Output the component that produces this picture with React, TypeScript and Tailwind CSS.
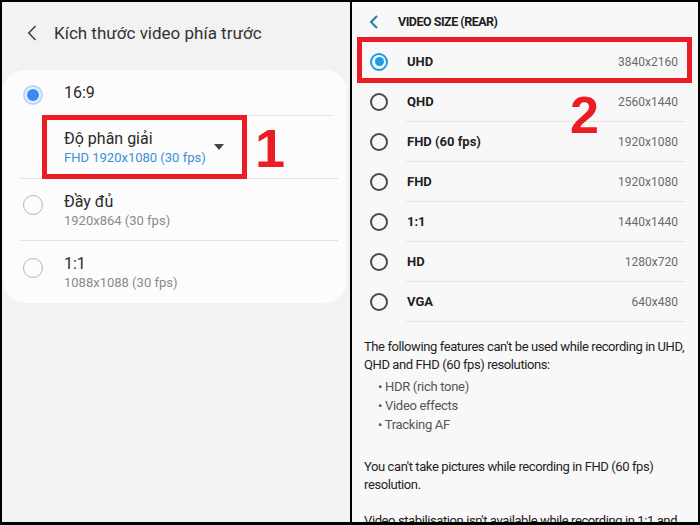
import React from "react";

const Radio = ({ on }: { on?: boolean }) =>
  on ? (
    <div className="w-[20px] h-[20px] rounded-full border-[2px] border-[#bcd6f7] bg-[#eaf2fd] flex items-center justify-center shrink-0">
      <div className="w-[12px] h-[12px] rounded-full bg-[#3d8bf0]" />
    </div>
  ) : (
    <div className="w-[20px] h-[20px] rounded-full border-[1.5px] border-[#b5b5b5] shrink-0" />
  );

const RRadio = ({ on }: { on?: boolean }) =>
  on ? (
    <div className="w-[18px] h-[18px] rounded-full border-[2px] border-[#1b9be0] flex items-center justify-center shrink-0">
      <div className="w-[9px] h-[9px] rounded-full bg-[#1b9be0]" />
    </div>
  ) : (
    <div className="w-[18px] h-[18px] rounded-full border-[2px] border-[#4a4a4a] shrink-0" />
  );

const rows = [
  ["UHD", "3840x2160"],
  ["QHD", "2560x1440"],
  ["FHD (60 fps)", "1920x1080"],
  ["FHD", "1920x1080"],
  ["1:1", "1440x1440"],
  ["HD", "1280x720"],
  ["VGA", "640x480"],
];

export default function App() {
  const rf = { fontFamily: 'Roboto, "Noto Sans", sans-serif' };
  return (
    <div className="w-[700px] h-[525px] bg-black flex gap-[2px] pt-[2px] pl-[2px] pr-[2px] pb-[3px] overflow-hidden">
      {/* LEFT */}
      <div className="w-[348px] h-full bg-[#f2f2f2] relative overflow-hidden" style={rf}>
        <div className="h-[68px] flex items-start pt-[19px]">
          <svg width="10" height="16" viewBox="0 0 10 16" className="ml-[25px] mt-[4px]">
            <path d="M8.5 1 L1.8 8 L8.5 15" fill="none" stroke="#444" strokeWidth="1.6" />
          </svg>
          <div className="ml-[17px] text-[17px] leading-[24px] text-[#333]">Kích thước video phía trước</div>
        </div>
        <div className="ml-[1px] mr-[3px] bg-[#fcfcfc] rounded-[22px]">
          <div className="h-[45px] flex items-start pt-[12px] pl-[20px]">
            <div className="mt-[3px]">
              <Radio on />
            </div>
            <div className="ml-[21px] text-[16px] leading-[22px] text-[#2a2a2a]">16:9</div>
          </div>
          <div className="h-px bg-[#e2e2e2] ml-[40px] mr-[14px]" />
          <div className="h-[62px] flex items-center pl-[61px]">
            <div className="w-[150px]">
              <div className="text-[16px] leading-[22px] text-[#2a2a2a]">Độ phân giải</div>
              <div className="text-[13px] leading-[16px] text-[#3a8fd6]">FHD 1920x1080 (30 fps)</div>
            </div>
            <svg width="10" height="6" viewBox="0 0 10 6" className="mt-[-1px]">
              <path d="M0 0 L10 0 L5 6 Z" fill="#444" />
            </svg>
          </div>
          <div className="h-px bg-[#e2e2e2] ml-[17px] mr-[9px]" />
          <div className="h-[61px] flex items-start pt-[12px] pl-[20px]">
            <div className="mt-[4px]">
              <Radio />
            </div>
            <div className="ml-[21px]">
              <div className="text-[16px] leading-[22px] text-[#2a2a2a]">Đầy đủ</div>
              <div className="text-[13px] leading-[16px] text-[#8a8a8a]">1920x864 (30 fps)</div>
            </div>
          </div>
          <div className="h-px bg-[#e2e2e2] ml-[17px] mr-[9px]" />
          <div className="h-[62px] flex items-start pt-[12px] pl-[20px]">
            <div className="mt-[5px]">
              <Radio />
            </div>
            <div className="ml-[21px]">
              <div className="text-[16px] leading-[22px] text-[#2a2a2a]">1:1</div>
              <div className="text-[13px] leading-[16px] text-[#8a8a8a]">1088x1088 (30 fps)</div>
            </div>
          </div>
        </div>
        {/* annotation 1 */}
        <div className="absolute left-[40px] top-[113px] w-[205px] h-[64px] border-[5px] border-[#ec1c24]" />
        <div
          className="absolute left-[253px] top-[116px] text-[54px] leading-[60px] font-bold text-[#ec1c24]"
          style={{ fontFamily: '"Liberation Sans", Arial, sans-serif' }}
        >
          1
        </div>
      </div>

      {/* RIGHT */}
      <div className="flex-1 h-full bg-[#f8f8f8] relative overflow-hidden" style={rf}>
        <div className="h-[40px] flex items-center">
          <svg width="10" height="14" viewBox="0 0 10 14" className="ml-[17px]">
            <path d="M8 1 L2 7 L8 13" fill="none" stroke="#1f7fa8" strokeWidth="2" />
          </svg>
          <div className="ml-[19px] text-[12.5px] tracking-[-0.5px] font-bold text-[#1e1e1e]">VIDEO SIZE (REAR)</div>
        </div>
        {rows.map(([l, v], i) => (
          <div key={i}>
            <div className="h-[39px] flex items-center pl-[18px] pr-[20px]">
              <RRadio on={i === 0} />
              <div className="ml-[19px] text-[13px] font-bold text-[#1e1e1e]">{l}</div>
              <div className="ml-auto text-[12px] text-[#6a6a6a]">{v}</div>
            </div>
            <div className={i > 0 ? "h-px bg-[#e4e4e4] ml-[54px] mr-[14px]" : "h-px"} />
          </div>
        ))}
        <div className="mt-[16px] pl-[12px] text-[13px] tracking-[-0.4px] leading-[18px] text-[#1e1e1e] whitespace-nowrap">
          The following features can't be used while recording in UHD,
          <br />
          QHD and FHD (60 fps) resolutions:
        </div>
        <div className="mt-[3px] pl-[26px] text-[13px] tracking-[-0.3px] leading-[19px] text-[#555] whitespace-nowrap">
          <div>• HDR (rich tone)</div>
          <div>• Video effects</div>
          <div>• Tracking AF</div>
        </div>
        <div className="mt-[24px] pl-[12px] text-[13px] tracking-[-0.4px] leading-[18px] text-[#1e1e1e] whitespace-nowrap">
          You can't take pictures while recording in FHD (60 fps)
          <br />
          resolution.
        </div>
        <div className="mt-[18px] pl-[12px] text-[13px] tracking-[-0.4px] leading-[18px] text-[#1e1e1e] whitespace-nowrap">
          Video stabilisation isn't available while recording in 1:1 and
        </div>
        {/* annotation 2 */}
        <div className="absolute left-[5px] top-[35px] w-[335px] h-[46px] border-[5px] border-[#ec1c24]" />
        <div
          className="absolute left-[218px] top-[83px] text-[52px] leading-[60px] font-bold text-[#ec1c24]"
          style={{ fontFamily: '"Liberation Sans", Arial, sans-serif' }}
        >
          2
        </div>
      </div>
    </div>
  );
}
